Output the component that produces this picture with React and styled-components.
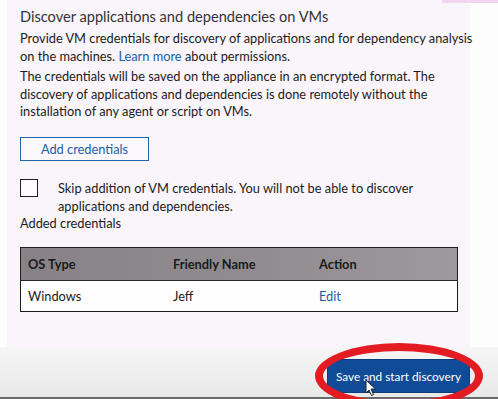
import React from "react";
import styled, { createGlobalStyle } from "styled-components";

const Global = createGlobalStyle`
  html, body {
    margin: 0;
    padding: 0;
    width: 498px;
    height: 399px;
    overflow: hidden;
    background: #fcfcfc;
    font-family: Lato, "Noto Sans", sans-serif;
    color: #1b1b1b;
  }
`;

const Screen = styled.div`
  position: relative;
  width: 498px;
  height: 399px;
  display: flex;
  flex-direction: column;
  background: #fdfdfd;
`;

const TopStrip = styled.div`
  position: absolute;
  top: 0;
  right: 0;
  width: 56px;
  height: 3px;
  background: #f2d6ef;
`;

const Panel = styled.div`
  margin-left: 7px;
  width: 463px;
  height: 347px;
  box-sizing: border-box;
  background: #f9f5fa;
  padding: 7px 12px 0 13px;
  display: flex;
  flex-direction: column;
  white-space: nowrap;
`;

const Title = styled.h2`
  margin: 0;
  font-size: 14.6px;
  font-weight: 400;
  line-height: 20px;
  color: #333;
`;

const Para = styled.p`
  margin: ${({ $top }) => $top}px 0 0;
  font-size: 12.8px;
  line-height: 17.6px;
`;

const Link = styled.a`
  color: #1a5ea8;
  text-decoration: none;
`;

const OutlineButton = styled.button`
  margin-top: 16px;
  width: 129px;
  height: 24px;
  background: #fbf9fc;
  border: 1px solid #1f64b0;
  color: #1a5ea8;
  font-family: inherit;
  font-size: 12.8px;
  padding: 0;
`;

const CheckRow = styled.div`
  margin-top: 18px;
  display: flex;
  gap: 20px;
  align-items: flex-start;
`;

const Box = styled.span`
  flex: none;
  width: 16px;
  height: 16px;
  border: 1px solid #222;
  background: #fdfbfd;
`;

const CheckText = styled.span`
  font-size: 12.8px;
  line-height: 18px;
`;

const Label = styled.div`
  font-size: 12.8px;
  line-height: 18px;
  margin-top: -1px;
`;

const Table = styled.table`
  margin-top: 15px;
  width: 438px;
  table-layout: fixed;
  border-collapse: collapse;
  border: 1px solid #1e1e1e;
  font-size: 12.8px;
`;

const HeadRow = styled.tr`
  background: linear-gradient(90deg, #888286 0%, #918c90 55%, #9d999c 100%);
`;

const Th = styled.th`
  text-align: left;
  font-weight: 700;
  height: 32px;
  padding: 0 0 0 7px;
  color: #1a1a1a;
  border-bottom: 1px solid #2a2a2a;
  width: ${({ $w }) => ($w ? `${$w}px` : "auto")};
`;

const Td = styled.td`
  height: 30px;
  padding: 0 0 0 7px;
  background: #fefefe;
  color: ${({ $link }) => ($link ? "#1a5ea8" : "#1b1b1b")};
`;

const Footer = styled.div`
  flex: 1;
  display: flex;
  justify-content: flex-end;
  align-items: flex-start;
  padding: 12px 28px 0 0;
  background: linear-gradient(180deg, #f6f6f6 0%, #e8e8e8 100%);
  border-bottom: 2px solid #6a6a6a;
`;

const PrimaryButton = styled.button`
  width: 143px;
  height: 34px;
  background: #0f4b97;
  border: 1px solid #0b3d7c;
  color: #fff;
  font-family: inherit;
  font-size: 11.8px;
  white-space: nowrap;
  padding: 0;
`;

const Ring = styled.div`
  position: absolute;
  left: 315px;
  top: 343px;
  width: 168px;
  height: 66px;
  box-sizing: border-box;
  border: 8px solid #e31b23;
  border-radius: 50%;
  pointer-events: none;
`;

const Cursor = styled.svg`
  position: absolute;
  left: 365px;
  top: 379px;
`;

export default function App() {
  return (
    <Screen>
      <Global />
      <TopStrip />
      <Panel>
        <Title>Discover applications and dependencies on VMs</Title>
        <Para $top={3}>
          Provide VM credentials for discovery of applications and for dependency analysis
          <br />
          on the machines. <Link>Learn more</Link> about permissions.
        </Para>
        <Para $top={3}>
          The credentials will be saved on the appliance in an encrypted format. The
          <br />
          discovery of applications and dependencies is done remotely without the
          <br />
          installation of any agent or script on VMs.
        </Para>
        <div>
          <OutlineButton>Add credentials</OutlineButton>
        </div>
        <CheckRow>
          <Box />
          <CheckText>
            Skip addition of VM credentials. You will not be able to discover
            <br />
            applications and dependencies.
          </CheckText>
        </CheckRow>
        <Label>Added credentials</Label>
        <Table>
          <thead>
            <HeadRow>
              <Th $w={138}>OS Type</Th>
              <Th $w={139}>Friendly Name</Th>
              <Th>Action</Th>
            </HeadRow>
          </thead>
          <tbody>
            <tr>
              <Td>Windows</Td>
              <Td>Jeff</Td>
              <Td $link>Edit</Td>
            </tr>
          </tbody>
        </Table>
      </Panel>
      <Footer>
        <PrimaryButton>Save and start discovery</PrimaryButton>
      </Footer>
      <Ring />
      <Cursor width="12" height="18" viewBox="0 0 12 18">
        <path d="M1 1 L1 14 L4 11 L6.5 16.5 L8.5 15.5 L6 10 L10.5 10 Z" fill="#fff" stroke="#222" strokeWidth="1" />
      </Cursor>
    </Screen>
  );
}
